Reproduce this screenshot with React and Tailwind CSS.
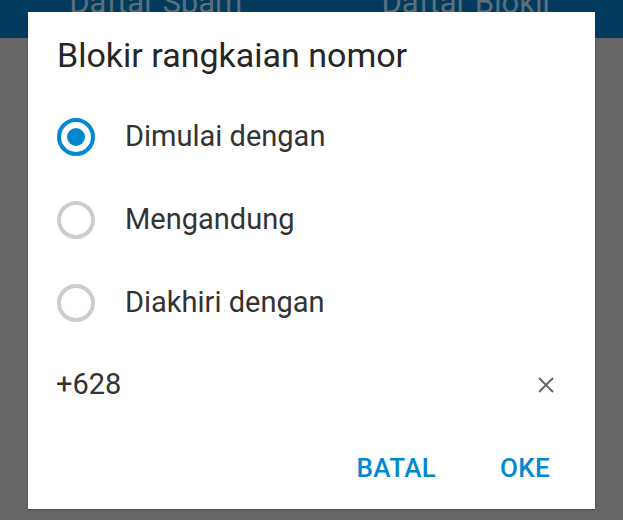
import { useState } from "react";

const options = ["Dimulai dengan", "Mengandung", "Diakhiri dengan"];

function Radio({ checked }) {
  return (
    <span
      className={
        "flex h-[38px] w-[38px] shrink-0 items-center justify-center rounded-full border-[4px] " +
        (checked ? "border-[#0288d1]" : "border-[#cccccc]")
      }
    >
      {checked && <span className="h-[18px] w-[18px] rounded-full bg-[#0288d1]" />}
    </span>
  );
}

export default function App() {
  const [selected, setSelected] = useState(0);
  const [value, setValue] = useState("+628");

  return (
    <div
      className="relative h-[520px] w-[623px] overflow-hidden bg-[#666666]"
      style={{ fontFamily: "Roboto, 'Noto Sans', sans-serif" }}
    >
      {/* dimmed app header behind the dialog */}
      <div className="flex h-[38px] items-start overflow-hidden bg-[#033b5e] text-[31px] text-[#5c6e7a]">
        <div className="-mt-[15px] flex w-full">
          <span className="w-1/2 text-center leading-[36px]">Daftar Spam</span>
          <span className="w-1/2 text-center leading-[36px]">Daftar Blokir</span>
        </div>
      </div>

      <div className="absolute left-[28px] top-[12px] flex h-[497px] w-[567px] flex-col bg-white shadow-[0_1px_2px_rgba(0,0,0,0.3)]">
        <h2 className="mt-[23px] pl-[29px] text-[34px] leading-[40px] text-[#262626]">
          Blokir rangkaian nomor
        </h2>

        <div className="mt-[20px] flex flex-col">
          {options.map((opt, i) => (
            <button
              key={opt}
              onClick={() => setSelected(i)}
              className="flex h-[83px] items-center gap-[30px] pl-[29px] text-left"
            >
              <Radio checked={selected === i} />
              <span className="text-[29px] text-[#333333]">{opt}</span>
            </button>
          ))}
        </div>

        <div className="flex h-[82px] items-center pl-[28px] pr-[39px]">
          <input
            value={value}
            onChange={(e) => setValue(e.target.value)}
            className="min-w-0 flex-1 bg-transparent text-[29px] text-[#333333] outline-none"
          />
          <button onClick={() => setValue("")} className="text-[#666666]">
            <svg width="20" height="20" viewBox="0 0 20 20">
              <path d="M3 3L17 17M17 3L3 17" stroke="currentColor" strokeWidth="2" />
            </svg>
          </button>
        </div>

        <div className="mt-[27px] flex justify-end gap-[64px] pr-[45px] leading-[30px]">
          <button className="text-[26px] font-medium tracking-[0.3px] text-[#0288d1]">BATAL</button>
          <button className="text-[26px] font-medium tracking-[0.3px] text-[#0288d1]">OKE</button>
        </div>
      </div>
    </div>
  );
}
